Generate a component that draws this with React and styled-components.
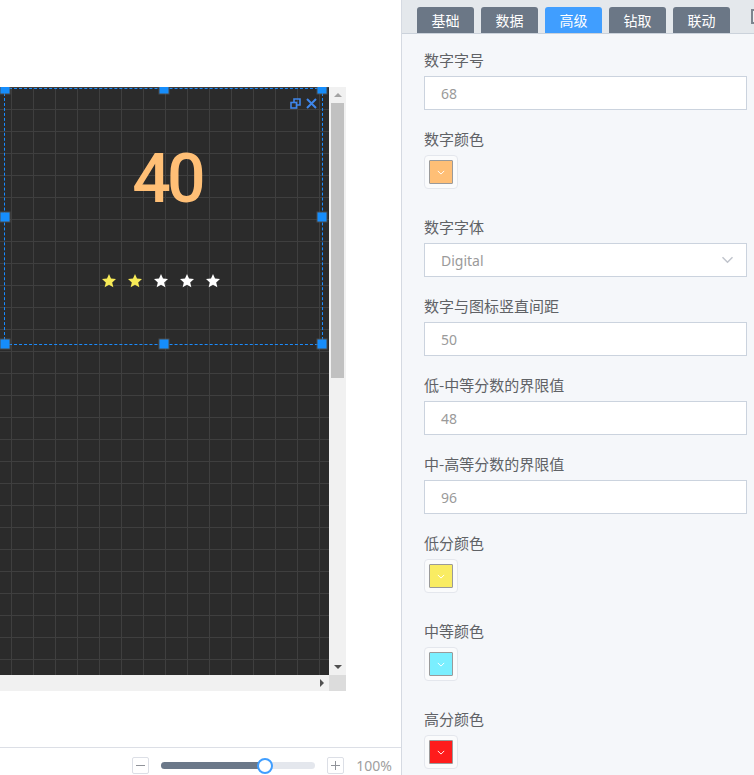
import React from 'react';
import styled, { createGlobalStyle } from 'styled-components';

const GlobalStyle = createGlobalStyle`
  html, body {
    margin: 0;
    padding: 0;
    width: 754px;
    height: 775px;
    overflow: hidden;
    background: #ffffff;
    font-family: "Noto Sans CJK SC", "Noto Sans", sans-serif;
  }
  * { box-sizing: border-box; }
`;

const Page = styled.div`
  display: flex;
  width: 754px;
  height: 775px;
`;

const Stage = styled.div`
  width: 401px;
  height: 100%;
  display: flex;
  flex-direction: column;
  background: #ffffff;
`;

const CanvasArea = styled.div`
  flex: 1;
  padding-top: 87px;
`;

const ScrollFrame = styled.div`
  display: grid;
  grid-template-columns: 329px 17px;
  grid-template-rows: 588px 16px;
  width: 346px;
`;

const Viewport = styled.div`
  position: relative;
  overflow: hidden;
  background-color: #2b2b2b;
  background-image: linear-gradient(90deg, #3f3f3f 1px, transparent 1px),
    linear-gradient(180deg, #3f3f3f 1px, transparent 1px);
  background-size: 22px 22px, 22px 22px;
  background-position: 11px 0, 0 0;
`;

const Widget = styled.div`
  position: absolute;
  left: ${(p) => p.$x}px;
  top: ${(p) => p.$y}px;
  width: ${(p) => p.$w}px;
  height: ${(p) => p.$h}px;
  border: 1px dashed #1a8cff;
  display: flex;
  flex-direction: column;
  align-items: center;
  padding-top: 56px;
`;

const Handle = styled.span`
  position: absolute;
  width: 9px;
  height: 9px;
  background: #168dfb;
  box-shadow: 0 0 0 1px rgba(90, 90, 90, 0.7);
  left: ${(p) => p.$l};
  top: ${(p) => p.$t};
  transform: translate(-50%, -50%);
`;

const WidgetTools = styled.div`
  position: absolute;
  right: 5px;
  top: 9px;
  display: flex;
  align-items: center;
  gap: 5px;
`;

const Digits = styled.div`
  font-family: Roboto, "Liberation Sans", sans-serif;
  font-weight: 500;
  font-size: 68px;
  line-height: 68px;
  letter-spacing: -4px;
  color: #ffbf76;
  padding-left: 7px;
`;

const Stars = styled.div`
  display: flex;
  gap: 10px;
  margin-top: 60px;
  margin-right: 6px;
`;

const VScroll = styled.div`
  background: #f1f1f1;
  display: flex;
  flex-direction: column;
  align-items: center;
`;

const HScroll = styled.div`
  background: #f1f1f1;
  display: flex;
  align-items: center;
  justify-content: flex-end;
  padding-right: 5px;
`;

const Corner = styled.div`
  background: #dcdcdc;
`;

const ArrowCell = styled.div`
  height: 16px;
  width: 100%;
  display: flex;
  align-items: center;
  justify-content: center;
`;

const Tri = styled.span`
  width: 0;
  height: 0;
  border-left: 4px solid transparent;
  border-right: 4px solid transparent;
  ${(p) =>
    p.$dir === 'up'
      ? `border-bottom: 4px solid ${p.$c};`
      : `border-top: 4px solid ${p.$c};`}
`;

const TriRight = styled.span`
  width: 0;
  height: 0;
  border-top: 4px solid transparent;
  border-bottom: 4px solid transparent;
  border-left: 4px solid #505050;
`;

const Thumb = styled.div`
  width: 13px;
  height: 275px;
  background: #c1c1c1;
`;

const Track = styled.div`
  flex: 1;
`;

const Footer = styled.div`
  height: 28px;
  border-top: 1px solid #dcdfe6;
  display: flex;
  justify-content: flex-end;
  align-items: flex-start;
  padding: 9px 9px 0 0;
  gap: 12px;
`;

const ZoomBtn = styled.div`
  width: 17px;
  height: 17px;
  border: 1px solid #dcdfe6;
  border-radius: 2px;
  background: #ffffff;
  display: flex;
  align-items: center;
  justify-content: center;
`;

const Slider = styled.div`
  position: relative;
  width: 154px;
  height: 7px;
  margin-top: 5px;
  border-radius: 4px;
  background: #e4e7ed;
`;

const SliderFill = styled.div`
  height: 100%;
  border-radius: 4px 0 0 4px;
  background: #6b7889;
`;

const SliderThumb = styled.div`
  position: absolute;
  top: 50%;
  width: 16px;
  height: 16px;
  border-radius: 50%;
  background: #ffffff;
  border: 2px solid #409eff;
  transform: translate(-50%, -50%);
`;

const ZoomText = styled.span`
  font-size: 14px;
  line-height: 17px;
  color: #a0a0a0;
  font-family: "Noto Sans", sans-serif;
`;

const Panel = styled.div`
  width: 353px;
  height: 100%;
  border-left: 1px solid #d5dae2;
  background: #f5f7fa;
  overflow: hidden;
`;

const TabBar = styled.div`
  height: 34px;
  display: flex;
  align-items: flex-end;
  gap: 7px;
  padding-left: 15px;
  background: #e4e8ec;
  border-bottom: 1px solid #cbd2db;
`;

const Tab = styled.div`
  width: 57px;
  height: 26px;
  flex-shrink: 0;
  border-radius: 3px 3px 0 0;
  background: ${(p) => (p.$active ? '#409eff' : '#6b7786')};
  color: #ffffff;
  font-size: 14px;
  line-height: 26px;
  text-align: center;
`;

const CollapseBox = styled.div`
  width: 16px;
  height: 15px;
  flex-shrink: 0;
  align-self: flex-start;
  margin: 9px 0 0 14px;
  border: 2px solid #7d858f;
  background: #eef0f2;
`;

const Form = styled.div`
  padding: 15px 7px 0 22px;
`;

const Field = styled.div`
  margin-bottom: ${(p) => (p.$color ? '27px' : '18px')};
`;

const Label = styled.div`
  font-size: 15px;
  line-height: 22px;
  color: #606266;
  margin-bottom: 5px;
`;

const Input = styled.div`
  height: 34px;
  background: #ffffff;
  border: 1px solid #cbd3de;
  padding-left: 16px;
  display: flex;
  align-items: center;
  justify-content: space-between;
  padding-right: 12px;
  font-size: 14px;
  color: #9a9a9a;
  font-family: "Noto Sans", sans-serif;
`;

const Swatch = styled.div`
  width: 34px;
  height: 34px;
  border: 1px solid #e4e7ed;
  border-radius: 4px;
  background: #fafbfc;
  display: flex;
  align-items: center;
  justify-content: center;
`;

const SwatchColor = styled.div`
  width: 24px;
  height: 24px;
  border: 1px solid #9a9a9a;
  border-radius: 1px;
  background: ${(p) => p.$c};
  display: flex;
  align-items: center;
  justify-content: center;
`;

const Chevron = ({ color = '#ffffff', size = 8 }) => (
  <svg width={size} height={size / 2 + 1} viewBox="0 0 10 6">
    <path d="M1 1 L5 5 L9 1" fill="none" stroke={color} strokeWidth="1.2" />
  </svg>
);

const Star = ({ color }) => (
  <svg width="16" height="16" viewBox="0 0 24 24">
    <polygon
      points="12,1.5 15,8.4 22.5,9.1 16.8,14.1 18.5,21.5 12,17.6 5.5,21.5 7.2,14.1 1.5,9.1 9,8.4"
      fill={color}
    />
  </svg>
);

const RestoreIcon = () => (
  <svg width="11" height="11" viewBox="0 0 11 11">
    <rect x="1" y="4.5" width="5.5" height="5.5" fill="none" stroke="#3f86ea" strokeWidth="1.6" />
    <path d="M4 4.5 V1 H10 V7 H6.5" fill="none" stroke="#3f86ea" strokeWidth="1.6" />
  </svg>
);

const CloseIcon = () => (
  <svg width="11" height="11" viewBox="0 0 11 11">
    <path d="M1 1 L10 10 M10 1 L1 10" stroke="#3f86ea" strokeWidth="2" />
  </svg>
);

const MinusIcon = () => (
  <svg width="11" height="11" viewBox="0 0 11 11">
    <path d="M1 5.5 H10" stroke="#909399" strokeWidth="1" />
  </svg>
);

const PlusIcon = () => (
  <svg width="11" height="11" viewBox="0 0 11 11">
    <path d="M1 5.5 H10 M5.5 1 V10" stroke="#909399" strokeWidth="1" />
  </svg>
);

const handles = [
  ['0%', '0%'],
  ['50%', '0%'],
  ['100%', '0%'],
  ['0%', '50%'],
  ['100%', '50%'],
  ['0%', '100%'],
  ['50%', '100%'],
  ['100%', '100%'],
];

const tabs = ['基础', '数据', '高级', '钻取', '联动'];

const fields = [
  { label: '数字字号', value: '68' },
  { label: '数字颜色', color: '#ffbf76' },
  { label: '数字字体', value: 'Digital', select: true },
  { label: '数字与图标竖直间距', value: '50' },
  { label: '低-中等分数的界限值', value: '48' },
  { label: '中-高等分数的界限值', value: '96' },
  { label: '低分颜色', color: '#f9ec62' },
  { label: '中等颜色', color: '#7aefff' },
  { label: '高分颜色', color: '#ff1c1c' },
];

const score = 40;
const zoom = 0.67;

const App = () => {
  return (
    <Page>
      <GlobalStyle />
      <Stage>
        <CanvasArea>
          <ScrollFrame>
            <Viewport>
              <Widget $x={4} $y={1} $w={319} $h={257}>
                {handles.map(([l, t]) => (
                  <Handle key={l + t} $l={l} $t={t} />
                ))}
                <WidgetTools>
                  <RestoreIcon />
                  <CloseIcon />
                </WidgetTools>
                <Digits>{score}</Digits>
                <Stars>
                  {[0, 1, 2, 3, 4].map((i) => (
                    <Star key={i} color={i < 2 ? '#f7ea57' : '#ffffff'} />
                  ))}
                </Stars>
              </Widget>
            </Viewport>
            <VScroll>
              <ArrowCell>
                <Tri $dir="up" $c="#a3a3a3" />
              </ArrowCell>
              <Thumb />
              <Track />
              <ArrowCell>
                <Tri $dir="down" $c="#505050" />
              </ArrowCell>
            </VScroll>
            <HScroll>
              <TriRight />
            </HScroll>
            <Corner />
          </ScrollFrame>
        </CanvasArea>
        <Footer>
          <ZoomBtn>
            <MinusIcon />
          </ZoomBtn>
          <Slider>
            <SliderFill style={{ width: `${zoom * 100}%` }} />
            <SliderThumb style={{ left: `${zoom * 100}%` }} />
          </Slider>
          <ZoomBtn>
            <PlusIcon />
          </ZoomBtn>
          <ZoomText>100%</ZoomText>
        </Footer>
      </Stage>
      <Panel>
        <TabBar>
          {tabs.map((t) => (
            <Tab key={t} $active={t === '高级'}>
              {t}
            </Tab>
          ))}
          <CollapseBox />
        </TabBar>
        <Form>
          {fields.map((f) => (
            <Field key={f.label} $color={!!f.color}>
              <Label>{f.label}</Label>
              {f.color ? (
                <Swatch>
                  <SwatchColor $c={f.color}>
                    <Chevron />
                  </SwatchColor>
                </Swatch>
              ) : (
                <Input>
                  <span>{f.value}</span>
                  {f.select && <Chevron color="#c0c4cc" size={13} />}
                </Input>
              )}
            </Field>
          ))}
        </Form>
      </Panel>
    </Page>
  );
};

export default App;
